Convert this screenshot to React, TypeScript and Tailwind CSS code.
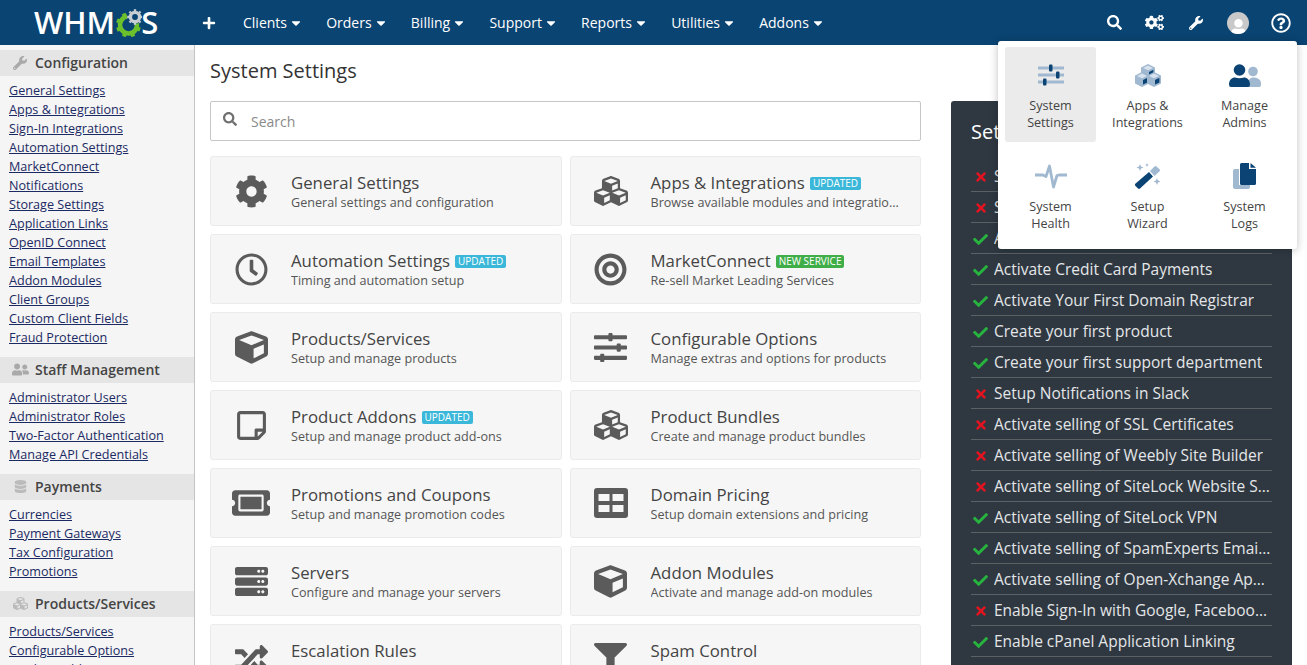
import type { ReactNode } from "react";
import {
  FaBullseye,
  FaCaretDown,
  FaCheck,
  FaCog,
  FaCogs,
  FaCube,
  FaCubes,
  FaDatabase,
  FaFilter,
  FaPlus,
  FaRandom,
  FaRegClock,
  FaRegQuestionCircle,
  FaRegStickyNote,
  FaSearch,
  FaServer,
  FaSlidersH,
  FaTicketAlt,
  FaTimes,
  FaUser,
  FaUserFriends,
  FaWrench,
} from "react-icons/fa";

const navItems = ["Clients", "Orders", "Billing", "Support", "Reports", "Utilities", "Addons"];

const sidebar = [
  {
    title: "Configuration",
    icon: <FaWrench className="size-[14px]" />,
    links: [
      "General Settings",
      "Apps & Integrations",
      "Sign-In Integrations",
      "Automation Settings",
      "MarketConnect",
      "Notifications",
      "Storage Settings",
      "Application Links",
      "OpenID Connect",
      "Email Templates",
      "Addon Modules",
      "Client Groups",
      "Custom Client Fields",
      "Fraud Protection",
    ],
  },
  {
    title: "Staff Management",
    icon: <FaUserFriends className="size-[17px]" />,
    links: ["Administrator Users", "Administrator Roles", "Two-Factor Authentication", "Manage API Credentials"],
  },
  {
    title: "Payments",
    icon: <FaDatabase className="size-[13px] text-[#bbb]" />,
    links: ["Currencies", "Payment Gateways", "Tax Configuration", "Promotions"],
  },
  {
    title: "Products/Services",
    icon: <FaCubes className="size-[15px] text-[#bbb]" />,
    links: ["Products/Services", "Configurable Options", "Product Addons"],
  },
];

interface Card {
  title: string;
  sub: string;
  icon: ReactNode;
  badge?: "UPDATED" | "NEW SERVICE";
}

// the pricing icon is a solid block with four cut-out cells
function PricingIcon() {
  return (
    <svg viewBox="0 0 34 30" className="h-[30px] w-[34px]">
      <rect width="34" height="30" rx="3" fill="#5b5b5b" />
      <rect x="4.500" y="6" width="11" height="7" fill="#f6f6f6" />
      <rect x="18.500" y="6" width="11" height="7" fill="#f6f6f6" />
      <rect x="4.500" y="17" width="11" height="7" fill="#f6f6f6" />
      <rect x="18.500" y="17" width="11" height="7" fill="#f6f6f6" />
    </svg>
  );
}

const cards: Card[] = [
  { title: "General Settings", sub: "General settings and configuration", icon: <FaCog className="size-[33px]" /> },
  {
    title: "Apps & Integrations",
    sub: "Browse available modules and integrations",
    icon: <FaCubes className="size-[34px]" />,
    badge: "UPDATED",
  },
  {
    title: "Automation Settings",
    sub: "Timing and automation setup",
    icon: <FaRegClock className="size-[33px]" />,
    badge: "UPDATED",
  },
  {
    title: "MarketConnect",
    sub: "Re-sell Market Leading Services",
    icon: <FaBullseye className="size-[33px]" />,
    badge: "NEW SERVICE",
  },
  { title: "Products/Services", sub: "Setup and manage products", icon: <FaCube className="size-[33px]" /> },
  {
    title: "Configurable Options",
    sub: "Manage extras and options for products",
    icon: <FaSlidersH className="size-[33px]" />,
  },
  {
    title: "Product Addons",
    sub: "Setup and manage product add-ons",
    icon: <FaRegStickyNote className="size-[33px]" />,
    badge: "UPDATED",
  },
  { title: "Product Bundles", sub: "Create and manage product bundles", icon: <FaCubes className="size-[34px]" /> },
  {
    title: "Promotions and Coupons",
    sub: "Setup and manage promotion codes",
    icon: <FaTicketAlt className="size-[38px]" />,
  },
  { title: "Domain Pricing", sub: "Setup domain extensions and pricing", icon: <PricingIcon /> },
  { title: "Servers", sub: "Configure and manage your servers", icon: <FaServer className="size-[33px]" /> },
  { title: "Addon Modules", sub: "Activate and manage add-on modules", icon: <FaCube className="size-[33px]" /> },
  { title: "Escalation Rules", sub: "Configure escalation rules", icon: <FaRandom className="size-[33px]" /> },
  { title: "Spam Control", sub: "Configure spam filters", icon: <FaFilter className="size-[33px]" /> },
];

const tasks: [boolean, string][] = [
  [false, "Setup your company details"],
  [false, "Setup the cron job"],
  [true, "Activate a payment gateway"],
  [true, "Activate Credit Card Payments"],
  [true, "Activate Your First Domain Registrar"],
  [true, "Create your first product"],
  [true, "Create your first support department"],
  [false, "Setup Notifications in Slack"],
  [false, "Activate selling of SSL Certificates"],
  [false, "Activate selling of Weebly Site Builder"],
  [false, "Activate selling of SiteLock Website Security"],
  [true, "Activate selling of SiteLock VPN"],
  [true, "Activate selling of SpamExperts Email Security"],
  [true, "Activate selling of Open-Xchange App Suite"],
  [false, "Enable Sign-In with Google, Facebook and Twitter"],
  [true, "Enable cPanel Application Linking"],
];

const DARK = "#0b4474";
const LIGHT = "#a0b8d0";

function SlidersDuo() {
  return (
    <svg viewBox="0 0 26 22" className="h-[22px] w-[26px]">
      <rect x="0" y="2.500" width="26" height="3" fill={LIGHT} />
      <rect x="0" y="9.500" width="26" height="3" fill={LIGHT} />
      <rect x="0" y="16.500" width="26" height="3" fill={LIGHT} />
      <rect x="11" y="0.500" width="3.500" height="7" rx="1" fill={DARK} />
      <rect x="18" y="7.500" width="3.500" height="7" rx="1" fill={DARK} />
      <rect x="5" y="14.500" width="3.500" height="7" rx="1" fill={DARK} />
    </svg>
  );
}

function Cube({ x, y }: { x: number; y: number }) {
  return (
    <g transform={`translate(${x} ${y})`}>
      <path d="M7 0l7 3.500v8L7 15l-7-3.500v-8z" fill={LIGHT} />
      <path d="M7 1.500l5 2.400L7 6.300 2 3.900z" fill="#d8e3ee" />
      <path d="M8 8l4.400-2.200v4.600L8 12.600z" fill={DARK} />
    </g>
  );
}

function CubesDuo() {
  return (
    <svg viewBox="0 0 26 23" className="h-[23px] w-[26px]">
      <Cube x={6} y={0} />
      <Cube x={0} y={8} />
      <Cube x={12} y={8} />
    </svg>
  );
}

function AdminsDuo() {
  return (
    <svg viewBox="0 0 32 23" className="h-[23px] w-[32px]">
      <circle cx="24" cy="7.500" r="4.800" fill={LIGHT} />
      <path d="M19 23v-3c0-4 2-6.500 5.500-6.500 4.500 0 7.500 2.500 7.500 6V21q0 2-2 2z" fill={LIGHT} />
      <circle cx="10.500" cy="6" r="5.800" fill={DARK} />
      <path d="M0 20.500C0 16 3 13.500 6 13.500q4.500 1.500 9 0c3 0 6 2.500 6 7Q21 23 19 23H2Q0 23 0 20.500z" fill={DARK} />
    </svg>
  );
}

function HealthDuo() {
  return (
    <svg viewBox="0 0 32 25" className="h-[25px] w-[32px]">
      <path
        d="M0 11h8l3 1.500L14.500 2l4 21 3.500-11.500 2-.5h8"
        fill="none"
        stroke={LIGHT}
        strokeWidth="2.800"
        strokeLinejoin="round"
      />
    </svg>
  );
}

function WizardDuo() {
  return (
    <svg viewBox="0 0 26 26" className="h-[26px] w-[26px]">
      <path d="M0 21L14 9l4 4.500L5 25.500q-1 .8-2 0L.5 23q-.8-1-.5-2z" fill={DARK} />
      <path d="M15 8l4.500-4.500q1-.8 2 0l3 2.800q.8 1 0 2L19.500 13z" fill={LIGHT} />
      <path d="M5 1l1 2.500L8.500 4.500 6 5.500 5 8 4 5.500 1.500 4.500 4 3.500z" fill={LIGHT} />
      <path d="M12 0l.6 1.400 1.400.6-1.400.6L12 4l-.6-1.400L10 2l1.400-.6z" fill={LIGHT} />
      <path d="M22 15l1 2.500 2.500 1-2.500 1-1 2.500-1-2.500-2.500-1 2.500-1z" fill={LIGHT} />
    </svg>
  );
}

function LogsDuo() {
  return (
    <svg viewBox="0 0 23 26" className="h-[26px] w-[23px]">
      <path d="M0 8q0-2 2-2h4v16h11v2q0 2-2 2H2q-2 0-2-2z" fill={LIGHT} />
      <path d="M7 1.500Q7 0 8.500 0H16v6h7v14.500q0 1.500-1.500 1.500h-13Q7 22 7 20.500z" fill={DARK} />
      <path d="M17.500 0L23 4.800h-5.500z" fill={DARK} />
    </svg>
  );
}

const menuItems = [
  { icon: <SlidersDuo />, label: ["System", "Settings"], active: true },
  { icon: <CubesDuo />, label: ["Apps &", "Integrations"] },
  { icon: <AdminsDuo />, label: ["Manage", "Admins"] },
  { icon: <HealthDuo />, label: ["System", "Health"] },
  { icon: <WizardDuo />, label: ["Setup", "Wizard"] },
  { icon: <LogsDuo />, label: ["System", "Logs"] },
];

function LogoGears() {
  return (
    <svg viewBox="0 0 27 30" className="h-[30px] w-[27px] shrink-0">
      <path d="M21.900 15.500A8.500 8.500 0 1 1 12 8.600" fill="none" stroke="#6cc02c" strokeWidth="4.600" />
      {[22, 67, 112, 157, 202, 247].map((a) => (
        <rect key={a} x="23" y="15" width="3" height="4" fill="#6cc02c" transform={`rotate(${a} 13.500 17)`} />
      ))}
      <circle cx="20" cy="9" r="4.600" fill="none" stroke="#c9ced3" strokeWidth="3.400" />
      {[0, 45, 90, 135, 180, 225, 270, 315].map((a) => (
        <rect key={a} x="26" y="7.800" width="1.800" height="2.400" fill="#c9ced3" transform={`rotate(${a} 20 9)`} />
      ))}
    </svg>
  );
}

function Logo() {
  return (
    <div className="flex w-[126px] items-center text-[31px] leading-none font-semibold text-white">
      <span>WHM</span>
      <LogoGears />
      <span className="-ml-[1px]">S</span>
    </div>
  );
}

function Header() {
  return (
    <header className="flex h-[45px] items-center bg-[#0a4472] pl-[34px] text-white">
      <Logo />
      <FaPlus className="ml-[42px] size-[14px]" />
      <nav className="ml-[27px] flex items-center gap-[23.200px] text-[14px]">
        {navItems.map((item) => (
          <span key={item} className="flex items-center gap-[2px]">
            {item}
            <FaCaretDown className="size-[14px]" />
          </span>
        ))}
      </nav>
      <div className="ml-auto flex items-center pr-[16px]">
        <FaSearch className="size-[15px]" />
        <FaCogs className="ml-[23px] size-[19px]" />
        <FaWrench className="ml-[25px] size-[14px]" />
        <span className="ml-[24px] flex size-[22px] items-end justify-center overflow-hidden rounded-full bg-[#c9c9c9]">
          <FaUser className="size-[17px] translate-y-[2px] text-white" />
        </span>
        <FaRegQuestionCircle className="ml-[22px] size-[20px]" />
      </div>
    </header>
  );
}

function Sidebar() {
  return (
    <aside className="w-[195px] shrink-0 border-r border-[#c4c4c4] bg-[#f5f5f5] pt-[5px]">
      {sidebar.map((group) => (
        <section key={group.title} className="mb-[10px]">
          <h3 className="flex h-[26px] items-center bg-[#e5e5e5] pb-[1px] text-[14px] font-semibold text-[#444]">
            <span className="flex w-[35px] shrink-0 justify-center pl-[5px] text-[#a9a9a9]">{group.icon}</span>
            {group.title}
          </h3>
          <ul className="mt-[5px] pl-[9px] text-[12.6px] leading-[19px] text-[#1b2a63] underline">
            {group.links.map((link) => (
              <li key={link}>{link}</li>
            ))}
          </ul>
        </section>
      ))}
    </aside>
  );
}

function SettingCard({ card }: { card: Card }) {
  return (
    <div className="flex h-[70px] items-center rounded-[3px] border border-[#ebebeb] bg-[#f6f6f6] text-[#444]">
      <span className="flex w-[80px] shrink-0 justify-center text-[#5b5b5b]">{card.icon}</span>
      <div className="min-w-0 flex-1 pr-[20px]">
        <div className="flex items-center text-[16.8px] leading-[21px]">
          {card.title}
          {card.badge && (
            <span
              className={`mt-[2px] ml-[5px] rounded-[2px] px-[3px] text-[10px] leading-[13px] text-white ${
                card.badge === "UPDATED" ? "bg-[#3ab7d9]" : "bg-[#3fae49]"
              }`}
            >
              {card.badge}
            </span>
          )}
        </div>
        <p className="mt-[1px] truncate text-[12.6px] leading-[17px] text-[#555]">{card.sub}</p>
      </div>
    </div>
  );
}

function TasksPanel() {
  return (
    <div className="h-[600px] w-[341px] shrink-0 rounded-t-[3px] bg-[#2f3841] px-[20px] pt-[19px] text-[#e4e6e8]">
      <h2 className="text-[20px] leading-[24px] text-white">Setup Tasks</h2>
      <ul className="mt-[17px]">
        {tasks.map(([done, label]) => (
          <li key={label} className="flex h-[31px] items-center border-b border-[#5c6166] pt-[2px] text-[15.5px]">
            <span className="flex w-[23px] shrink-0 justify-start pl-[2px]">
              {done ? (
                <FaCheck className="size-[15px] text-[#27b43e]" />
              ) : (
                <FaTimes className="ml-[1px] size-[14px] text-[#e3141f]" />
              )}
            </span>
            <span className="truncate">{label}</span>
          </li>
        ))}
      </ul>
    </div>
  );
}

function ConfigMenu() {
  return (
    <div className="absolute top-[41px] right-[10px] z-10 grid w-[299px] grid-cols-3 gap-x-[6px] gap-y-[6px] rounded-[3px] bg-white p-[6px] px-[7px] shadow-[0_1px_8px_rgba(0,0,0,0.25)]">
      {menuItems.map((item) => (
        <div
          key={item.label.join(" ")}
          className={`flex h-[95px] flex-col items-center rounded-[3px] pt-[15px] text-center text-[12.6px] leading-[17px] text-[#444] ${
            item.active ? "bg-[#ebebeb]" : ""
          }`}
        >
          <span className="flex h-[26px] items-center">{item.icon}</span>
          <span className="mt-[9px]">
            {item.label[0]}
            <br />
            {item.label[1]}
          </span>
        </div>
      ))}
    </div>
  );
}

export default function App() {
  return (
    <div className="relative h-screen overflow-hidden bg-white font-['Open_Sans',sans-serif]">
      <Header />
      <ConfigMenu />
      <div className="flex h-[620px]">
        <Sidebar />
        <main className="min-w-0 flex-1 pt-[12px] pr-[15px] pl-[15px]">
          <h1 className="text-[20px] leading-[27px] text-[#333]">System Settings</h1>
          <div className="mt-[17px] flex gap-[30px]">
            <div className="w-[711px] shrink-0">
              <div className="flex h-[40px] items-center rounded-[2px] border border-[#c6c6c6] bg-white pl-[12px] text-[14px] text-[#8a8a8a]">
                <FaSearch className="size-[14px] -translate-y-[2px] text-[#707070]" />
                <span className="ml-[14px]">Search</span>
              </div>
              <div className="mt-[15px] grid grid-cols-2 gap-x-[8px] gap-y-[8px]">
                {cards.map((card) => (
                  <SettingCard key={card.title} card={card} />
                ))}
              </div>
            </div>
            <TasksPanel />
          </div>
        </main>
      </div>
    </div>
  );
}
